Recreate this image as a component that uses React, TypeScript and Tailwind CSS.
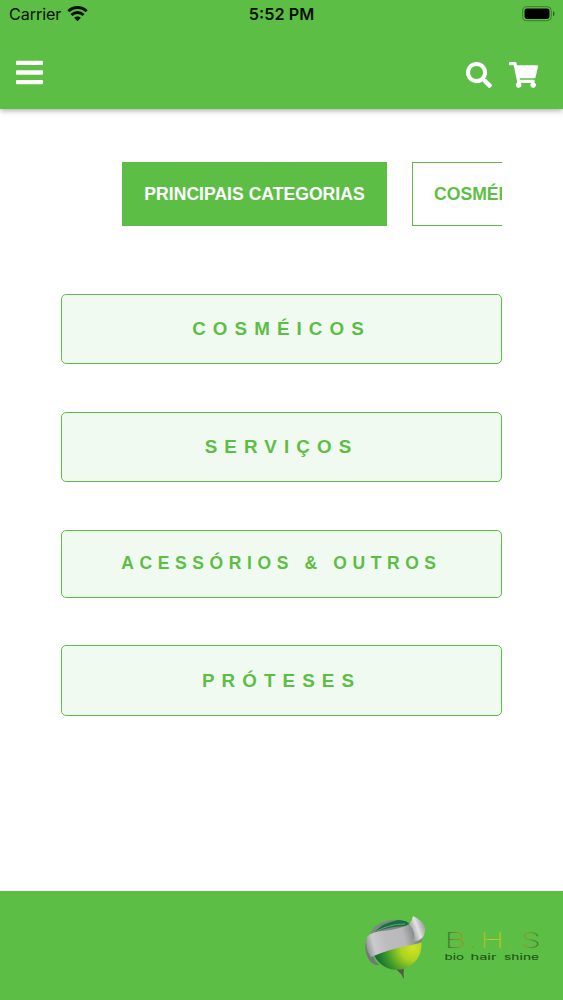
import { FaBars, FaSearch, FaShoppingCart } from "react-icons/fa";

const categories = [
  { name: "COSMÉICOS", style: "mt-[68px] h-[70px] text-[18.8px] tracking-[7.1px]" },
  { name: "SERVIÇOS", style: "mt-[48px] h-[70px] pt-px text-[18.8px] tracking-[7.1px]" },
  { name: "ACESSÓRIOS & OUTROS", style: "mt-[48px] h-[68px] pb-px text-[17.5px] tracking-[5.6px]" },
  { name: "PRÓTESES", style: "mt-[47px] h-[71px] pt-px text-[18.8px] tracking-[7.1px]" },
];

function Wifi() {
  return (
    <svg width="21" height="16" viewBox="0 0 20 16" fill="none" stroke="#071004" strokeWidth="2.9">
      <path d="M.8 5.2C6 .2 14 .2 19.2 5.2" />
      <path d="M4 9C7.4 5.7 12.6 5.7 16 9" />
      <path d="M6.6 11.8c1.9-1.9 4.9-1.9 6.8 0L10 15.2z" fill="#071004" stroke="none" />
    </svg>
  );
}

function Battery() {
  return (
    <svg width="34" height="16" viewBox="0 0 34 16">
      <rect x="1.7" y=".7" width="28.6" height="14" rx="4" fill="none" stroke="#348026" />
      <rect x="3.5" y="2.5" width="25" height="10.4" rx="2.3" fill="#000" />
      <path d="M32 5.2c2 .6 2 4.4 0 5z" fill="#27651c" />
    </svg>
  );
}

function Logo() {
  return (
    <svg width="190" height="74" viewBox="360 909 190 74" fontFamily="Inter, sans-serif">
      <defs>
        <radialGradient id="ball" cx="413" cy="948" r="42" gradientUnits="userSpaceOnUse">
          <stop offset="0" stopColor="#d3e322" />
          <stop offset=".3" stopColor="#a9d322" />
          <stop offset=".65" stopColor="#3c982b" />
          <stop offset="1" stopColor="#08583b" />
        </radialGradient>
        <linearGradient id="band" x1="366" y1="948" x2="424" y2="932" gradientUnits="userSpaceOnUse">
          <stop offset="0" stopColor="#8e8e90" />
          <stop offset=".14" stopColor="#cbcacc" />
          <stop offset=".35" stopColor="#bcbbbe" />
          <stop offset=".65" stopColor="#b9b9bc" />
          <stop offset=".85" stopColor="#838786" />
          <stop offset="1" stopColor="#777d7a" />
        </linearGradient>
        <linearGradient id="curl" x1="411" y1="930" x2="425" y2="925" gradientUnits="userSpaceOnUse">
          <stop offset="0" stopColor="#a0a3a2" />
          <stop offset=".45" stopColor="#e3e2e3" />
          <stop offset="1" stopColor="#949895" />
        </linearGradient>
        <linearGradient id="letters" x1="446" y1="0" x2="539" y2="0" gradientUnits="userSpaceOnUse">
          <stop offset="0" stopColor="#34792a" />
          <stop offset=".15" stopColor="#8d9b31" />
          <stop offset=".3" stopColor="#7aa52b" />
          <stop offset=".5" stopColor="#c2d32c" />
          <stop offset=".72" stopColor="#7eac29" />
          <stop offset=".87" stopColor="#8b9734" />
          <stop offset="1" stopColor="#367c2c" />
        </linearGradient>
      </defs>
      <path d="M396 969L404 968Q403 974 404 979Q401 973 396 969Z" fill="#515b4b" />
      <circle cx="396.7" cy="945" r="24.8" fill="url(#ball)" />
      <path d="M369 937Q373 924 386 921Q398 918 408 922L411 927L373 940Z" fill="#7b8883" />
      <path d="M375 932Q382 923 398 920Q408 920 411 926Q393 925 375 932Z" fill="#14713d" />
      <path d="M377 931Q390 924 405 924" fill="none" stroke="#8ba197" strokeWidth=".8" />
      <path d="M368 937Q362 948 369 960Q373 966 379 965Q374 960 372 954Z" fill="#737a76" />
      <path d="M367 937Q371 932 382 931Q400 930 413 922L422 939Q423 943 416 944Q389 949 371 957Q364 948 367 937Z" fill="url(#band)" />
      <path d="M409 924Q412 921 413 916Q422 920 425 927Q426 935 421 939Q417 942 413 942Q417 933 409 924Z" fill="url(#curl)" />
      <g fill="url(#letters)" fontSize="21" fontWeight="200">
        <text x="444.5" y="948" textLength="22" lengthAdjust="spacingAndGlyphs">B</text>
        <text x="471" y="948" fontSize="16" fontWeight="400">.</text>
        <text x="480" y="948" textLength="24" lengthAdjust="spacingAndGlyphs">H</text>
        <text x="507" y="948" fontSize="16" fontWeight="400">.</text>
        <text x="521.5" y="948" textLength="19" lengthAdjust="spacingAndGlyphs">S</text>
      </g>
      <g fill="#225b19" fontSize="7.7" fontWeight="500">
        <text x="444.5" y="960" textLength="19.5" lengthAdjust="spacingAndGlyphs">bio</text>
        <text x="470.5" y="960" textLength="26" lengthAdjust="spacingAndGlyphs">hair</text>
        <text x="504" y="960" textLength="35" lengthAdjust="spacingAndGlyphs">shine</text>
      </g>
    </svg>
  );
}

export default function App() {
  return (
    <div className="flex h-[1000px] w-full flex-col overflow-hidden bg-white font-['Liberation_Sans',sans-serif]">
      <header className="h-[109px] shrink-0 bg-[#5dbe46] text-white shadow-[0_2px_5px_rgba(0,0,0,0.3)]">
        <div className="grid h-7 grid-cols-3 items-center pl-[9px] pr-2 font-['Inter',sans-serif] text-[16px] text-[#071004]">
          <div className="flex items-center gap-[6px]">
            <span className="text-[16.2px] tracking-[-0.1px]">Carrier</span>
            <Wifi />
          </div>
          <span className="-ml-px text-center text-[16.3px] font-semibold">5:52 PM</span>
          <div className="flex justify-end">
            <Battery />
          </div>
        </div>
        <nav className="flex h-[88px] items-center pl-4 pr-[25px]">
          <button aria-label="Menu">
            <FaBars className="h-[31px] w-[27px]" />
          </button>
          <div className="ml-auto flex items-center gap-[17px] pt-[5px]">
            <button aria-label="Buscar">
              <FaSearch className="size-[26px]" />
            </button>
            <button aria-label="Carrinho">
              <FaShoppingCart className="h-[26px] w-[29px]" />
            </button>
          </div>
        </nav>
      </header>

      <main className="flex-1 px-[61px] pt-[53px] font-bold text-[#5dbe46]">
        <div className="flex gap-[25px] overflow-hidden pl-[61px] text-[17.6px]">
          <button className="h-16 w-[265px] shrink-0 bg-[#5dbe46] text-white">PRINCIPAIS CATEGORIAS</button>
          <button className="h-16 w-[160px] shrink-0 border border-[#5dbe46] pl-[21px] text-left">COSMÉICOS</button>
        </div>
        {categories.map(({ name, style }) => (
          <button
            key={name}
            className={`flex w-full items-center justify-center rounded-[5px] border-[1.5px] border-[#5dbe46] bg-[#f1faf1] ${style}`}
          >
            {name}
          </button>
        ))}
      </main>

      <footer className="flex h-[109px] shrink-0 justify-end bg-[#5dbe46] pr-[13px] pt-[18px]">
        <Logo />
      </footer>
    </div>
  );
}
